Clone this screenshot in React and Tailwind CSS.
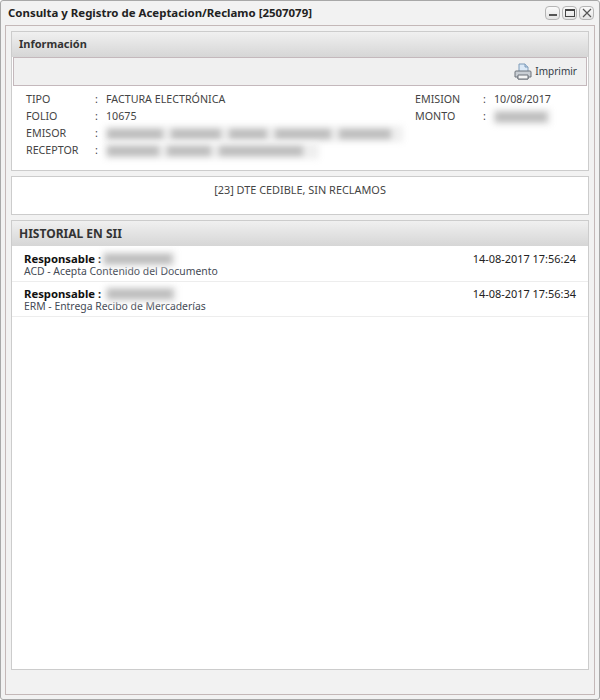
function Blur({ w, segs, className = "" }) {
  return (
    <span
      className={`flex h-[16px] shrink-0 items-center gap-[8px] bg-[#efefef] px-[2px] blur-[3px] ${className}`}
      style={{ width: w }}
    >
      {segs.map((s, i) => (
        <span key={i} className="block h-[10px] bg-[#bcbcbc]" style={{ width: s }} />
      ))}
    </span>
  );
}

function Row({ label, value, blur, segs, labelW = "w-[69px]" }) {
  return (
    <div className="flex h-[17px] items-center">
      <span className={labelW}>{label}</span>
      <span className="w-[10px]">:</span>
      {blur ? <Blur w={blur} segs={segs} /> : <span className="ml-[1px]">{value}</span>}
    </div>
  );
}

function Header({ children, size }) {
  return (
    <div className={`flex h-[25px] items-center bg-gradient-to-b from-[#f0f0f0] to-[#d6d6d6] pl-[7px] font-bold text-[#333333] ${size}`}>
      {children}
    </div>
  );
}

function WinButton({ children }) {
  return (
    <div className="flex h-[14px] w-[15px] items-center justify-center rounded-[4px] border border-[#b5b5b5] bg-gradient-to-b from-[#fafafa] to-[#e4e4e4]">
      {children}
    </div>
  );
}

function Entry({ blur, segs, blurGap, text, date }) {
  return (
    <div className="flex h-[35px] justify-between border-b border-[#ededed] px-[12px] pt-[5px] leading-[13px]">
      <div>
        <div className="flex h-[13px] items-center text-[11.3px] font-bold text-[#111111]">
          <span>Responsable :</span>
          <Blur w={blur} segs={segs} className={blurGap} />
        </div>
        <div className="text-[10.4px] text-[#444a55]">{text}</div>
      </div>
      <div className="text-[10.95px] text-[#222222]">{date}</div>
    </div>
  );
}

export default function App() {
  return (
    <div className="flex h-[700px] w-[600px] flex-col overflow-hidden rounded-[3px] border border-[#a8a8a8] bg-[#f2f2f2] font-['Noto_Sans','DejaVu_Sans',sans-serif] text-[10.7px] text-[#444444]">
      <div className="flex h-[24px] shrink-0 items-center justify-between pl-[7px] pr-[5px]">
        <span className="text-[11.45px] font-bold text-[#222222]">Consulta y Registro de Aceptacion/Reclamo [2507079]</span>
        <div className="flex gap-[2px]">
          <WinButton>
            <span className="mt-[4px] block h-[2px] w-[8px] bg-[#555555]" />
          </WinButton>
          <WinButton>
            <span className="block h-[8px] w-[10px] border border-t-2 border-[#444444]" />
          </WinButton>
          <WinButton>
            <svg width="10" height="10" viewBox="0 0 10 10" fill="none" stroke="#555555" strokeWidth="1.2">
              <path d="M1 1l8 8M9 1l-8 8" />
            </svg>
          </WinButton>
        </div>
      </div>
      <div className="mx-[4px] mb-[4px] flex min-h-0 flex-1 flex-col gap-[5px] border border-[#c4b8b8] bg-[#f2f2f2] px-[5px] pb-[24px] pt-[5px]">
        <section className="h-[140px] shrink-0 border border-[#cccccc] bg-white">
          <Header size="text-[11px]">Información</Header>
          <div className="mx-[1px] flex h-[29px] items-center justify-end border border-[#c4b8bc] bg-[#f0f0f0] pr-[9px] text-[10px] text-[#333a45]">
            <svg width="18" height="17" viewBox="0 0 18 17" className="mr-[3px]">
              <path d="M5 1h6l3 3v5H5z" fill="#dbe9f7" stroke="#7f9bb8" />
              <path d="M11 1v3h3" fill="#b8d0ea" stroke="#7f9bb8" />
              <path d="M2 8h14a1 1 0 0 1 1 1v5h-3v2H4v-2H1V9a1 1 0 0 1 1-1z" fill="#c9ced4" stroke="#6c737b" />
              <path d="M4 12h10v4H4z" fill="#f4f4f4" stroke="#6c737b" />
            </svg>
            <span>Imprimir</span>
          </div>
          <div className="flex justify-between pl-[14px] pr-[37px] pt-[5px]">
            <div>
              <Row label="TIPO" value="FACTURA ELECTRÓNICA" />
              <Row label="FOLIO" value="10675" />
              <Row label="EMISOR" blur={298} segs={[56, 50, 38, 56, 52]} />
              <Row label="RECEPTOR" blur={214} segs={[52, 44, 84]} />
            </div>
            <div>
              <Row label="EMISION" value="10/08/2017" labelW="w-[68px]" />
              <Row label="MONTO" blur={58} segs={[52]} labelW="w-[68px]" />
            </div>
          </div>
        </section>
        <section className="flex h-[39px] shrink-0 justify-center border border-[#cccccc] bg-white pt-[5px] text-[10.9px] text-[#444444]">
          [23] DTE CEDIBLE, SIN RECLAMOS
        </section>
        <section className="min-h-0 flex-1 border border-[#cccccc] bg-white">
          <Header size="text-[12px]">HISTORIAL EN SII</Header>
          <div className="pt-[1px]">
            <Entry blur={74} segs={[68]} blurGap="ml-[1px]" text="ACD - Acepta Contenido del Documento" date="14-08-2017 17:56:24" />
            <Entry blur={72} segs={[66]} blurGap="ml-[4px]" text="ERM - Entrega Recibo de Mercaderías" date="14-08-2017 17:56:34" />
          </div>
        </section>
      </div>
    </div>
  );
}
